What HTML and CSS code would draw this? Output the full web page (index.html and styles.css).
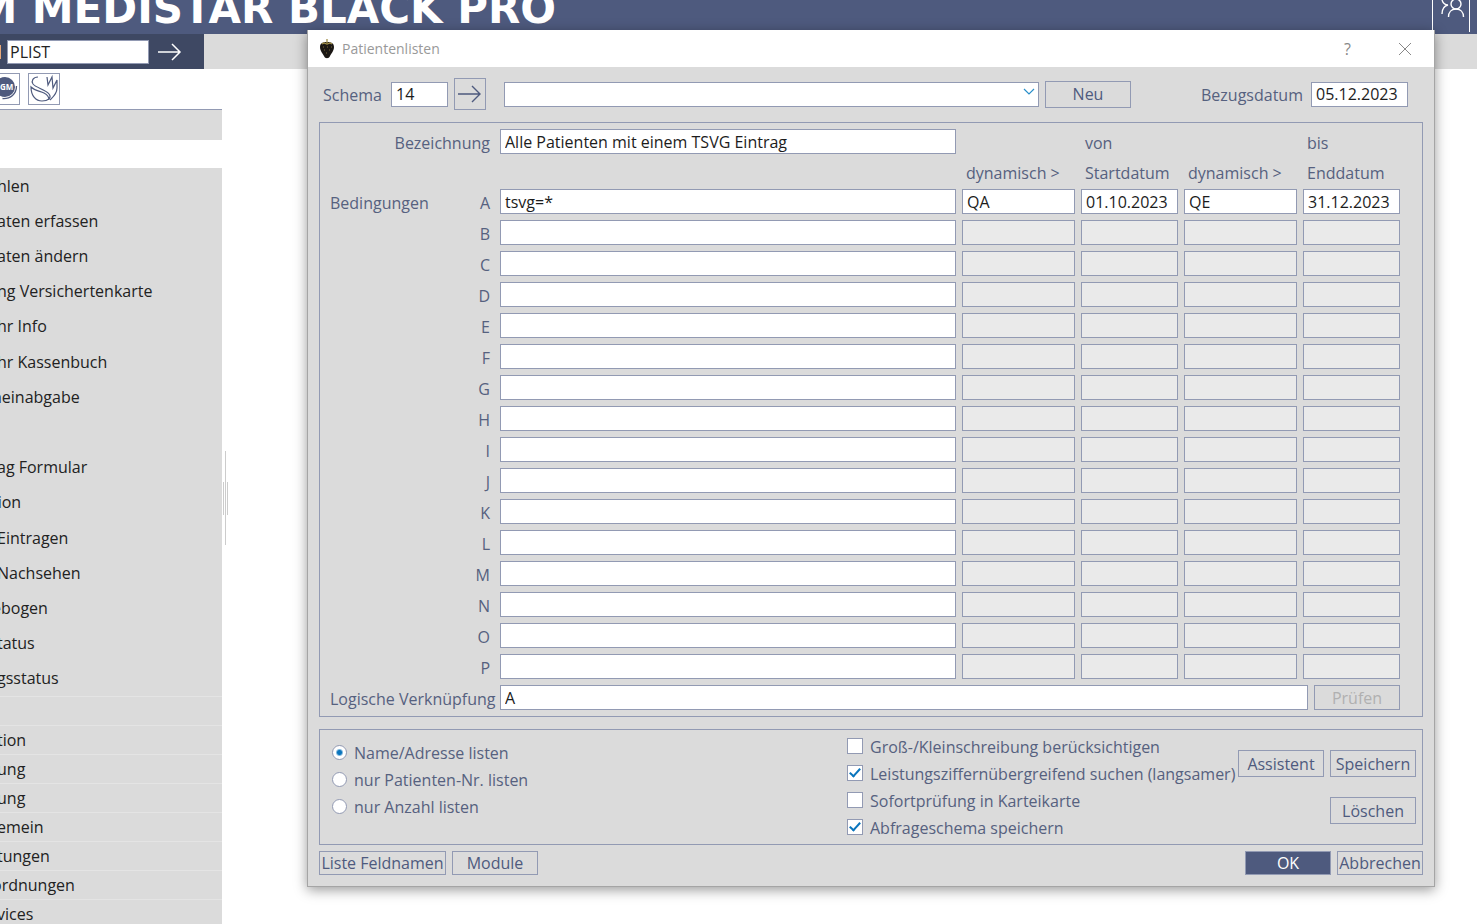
FILE: index.html
```html
<!DOCTYPE html>
<html lang="de">
<head>
<meta charset="utf-8">
<title>Patientenlisten</title>
<link rel="stylesheet" href="styles.css">
</head>
<body>
<div class="app">
  <header class="brand">
    <div class="brand-clip"><span class="brand-name">M MEDISTAR BLACK PRO</span></div>
    <button class="user-button" type="button" aria-label="Benutzer">
      <svg width="36" height="32" viewBox="0 0 36 32" fill="none" stroke="#fff" stroke-width="1.4"><circle cx="23" cy="4" r="5"/><path d="M15.500 17c0-5 3-8 7.500-8s7.500 3 7.500 8M9 0c1 3 3 5 6 5-4 1-6 4-6 9"/></svg>
    </button>
  </header>
  <div class="command-bar">
    <form class="command">
      <span class="marker"></span>
      <input class="command-input" type="text" value="PLIST" aria-label="Befehl">
      <button class="go" type="button" aria-label="Ausführen">
        <svg width="24" height="18" viewBox="0 0 24 18" fill="none" stroke="#fff" stroke-width="1.5"><path d="M0 9h22M14 1l8 8-8 8"/></svg>
      </button>
    </form>
  </div>
  <aside class="side">
    <div class="tools">
      <button class="tool" type="button" aria-label="CGM">
        <svg width="30" height="30" viewBox="0 0 30 30"><circle cx="16" cy="13" r="10" fill="#4e5a7e"/><path d="M27.500 12c0 8-6 13-14 12.500" fill="none" stroke="#4e5a7e" stroke-width="1.3"/><text x="11" y="16" class="tool-text">GM</text></svg>
      </button>
      <button class="tool" type="button" aria-label="Signatur">
        <svg width="30" height="30" viewBox="0 0 30 30" fill="none" stroke="#4e5a7e" stroke-width="1.2"><path d="M9 3C4 3 2 7 4 10c3 4 12 5 16 10 3 4-1 7-7 7C7 27 2 22 2 13c4 4 9 4 13 6 4 2 5 4 5 7"/><path d="M18 3l1 8 4-8 1 11 4-8v8c0 6-4 9-7 12"/></svg>
      </button>
    </div>
    <div class="side-head"></div>
    <nav class="menu">
      <a href="#">hlen</a><a href="#">aten erfassen</a><a href="#">aten ändern</a><a href="#">ng Versichertenkarte</a><a href="#">hr Info</a><a href="#">hr Kassenbuch</a><a class="cut" href="#">heinabgabe</a><span></span><a href="#">ag Formular</a><a class="cut" href="#">tion</a><a href="#">Eintragen</a><a href="#">Nachsehen</a><a class="cut" href="#">ebogen</a><a href="#">tatus</a><a href="#">gsstatus</a>
    </nav>
    <nav class="sections">
      <span></span><a href="#">tion</a><a href="#">ung</a><a href="#">ung</a><a href="#">emein</a><a href="#">tungen</a><a class="cut" href="#">ordnungen</a><a href="#">vices</a>
    </nav>
  </aside>
  <div class="splitter"></div>
</div>

<section class="dialog" role="dialog" aria-labelledby="dialog-title">
  <div class="title-bar">
    <svg width="16" height="20" viewBox="0 0 16 20"><path d="M1 8C1 4 4 3 8 3s7 1 7 5c0 4-3 7-4 9-1 3-5 3-6 0C4 15 1 12 1 8z" fill="#1b1714"/><path d="M8 0v4M3 5l2-1 3 1 3-1 2 1" fill="none" stroke="#a3904a" stroke-width="1.3"/><path d="M4 8h1M8 8h1M12 8h1M5 11h1M10 11h1M7 14h1" stroke="#7c6c3a"/></svg>
    <h1 id="dialog-title">Patientenlisten</h1>
    <button class="window-button" type="button">?</button>
    <button class="window-button" type="button" aria-label="Schließen"><svg width="12" height="12" viewBox="0 0 12 12" stroke="#888" fill="none"><path d="M0 0l12 12M12 0L0 12"/></svg></button>
  </div>
  <form class="dialog-body">
    <div class="schema-row">
      <label for="schema">Schema</label>
      <input class="field schema-input" id="schema" type="text" value="14">
      <button class="button arrow-button" type="button" aria-label="Schema laden"><svg width="24" height="18" viewBox="0 0 24 18" fill="none" stroke="#4e5a7e" stroke-width="1.4"><path d="M0 9h22M14 1l8 8-8 8"/></svg></button>
      <div class="combo">
        <select class="field" aria-label="Schemaname"><option></option></select>
        <svg class="chevron" width="12" height="7" viewBox="0 0 12 7" fill="none" stroke="#2a8fc9" stroke-width="1.2"><path d="M1 1l5 5 5-5"/></svg>
      </div>
      <button class="button tall" type="button">Neu</button>
      <label class="ref-label" for="ref-date">Bezugsdatum</label>
      <input class="field date-input" id="ref-date" type="text" value="05.12.2023">
    </div>

    <div class="box conditions" id="conditions">
      <label class="row-label" for="name">Bezeichnung</label>
      <input class="field" id="name" type="text" value="Alle Patienten mit einem TSVG Eintrag">
      <span class="head from">von</span>
      <span class="head until">bis</span>
      <span class="head dynamic">dynamisch &gt;</span>
      <span class="head">Startdatum</span>
      <span class="head">dynamisch &gt;</span>
      <span class="head">Enddatum</span>
      <label class="row-label first" for="cond-A"><span>Bedingungen</span><span>A</span></label>
      <input class="field" id="cond-A" type="text" value="tsvg=*">
      <input class="field" type="text" value="QA" aria-label="A dynamisch von">
      <input class="field" type="text" value="01.10.2023" aria-label="A Startdatum">
      <input class="field" type="text" value="QE" aria-label="A dynamisch bis">
      <input class="field" type="text" value="31.12.2023" aria-label="A Enddatum">
      <div class="rows" id="rows"></div>
      <label class="row-label" for="logic">Logische Verknüpfung</label>
      <div class="logic">
        <input class="field" id="logic" type="text" value="A">
        <button class="button" type="button" disabled>Prüfen</button>
      </div>
    </div>

    <div class="box options">
      <div class="choices radios">
        <label><input type="radio" name="output" checked>Name/Adresse listen</label>
        <label><input type="radio" name="output">nur Patienten-Nr. listen</label>
        <label><input type="radio" name="output">nur Anzahl listen</label>
      </div>
      <div class="choices">
        <label><input type="checkbox">Groß-/Kleinschreibung berücksichtigen</label>
        <label><input type="checkbox" checked>Leistungsziffernübergreifend suchen (langsamer)</label>
        <label><input type="checkbox">Sofortprüfung in Karteikarte</label>
        <label><input type="checkbox" checked>Abfrageschema speichern</label>
      </div>
      <div class="actions">
        <button class="button tall" type="button">Assistent</button>
        <button class="button tall" type="button">Speichern</button>
        <button class="button tall last" type="button">Löschen</button>
      </div>
    </div>

    <div class="footer">
      <button class="button wide" type="button">Liste Feldnamen</button>
      <button class="button" type="button">Module</button>
      <button class="button primary" type="button">OK</button>
      <button class="button" type="button">Abbrechen</button>
    </div>
  </form>
</section>
<script src="script.js"></script>
</body>
</html>
```
FILE: styles.css
```css
:root {
  --brand: #4e5a7e;
  --brand-dark: #3e4863;
  --line: #929ab3;
  --panel: #dbdbdb;
  --label: #56617f;
}

*, *::before, *::after { box-sizing: border-box; }

body {
  margin: 0;
  min-height: 100vh;
  background: #fff;
  color: #222;
  font: 16px/20px "Open Sans", "Noto Sans", sans-serif;
  overflow: hidden;
}

input, button, select { font: inherit; }
a { color: inherit; text-decoration: none; }
svg { display: block; flex: none; }

.app { height: 100vh; overflow: hidden; }

.brand {
  display: flex;
  justify-content: space-between;
  height: 34px;
  padding-right: 7px;
  background: var(--brand);
  overflow: hidden;
}
.brand-clip {
  display: flex;
  align-items: flex-end;
  justify-content: flex-end;
  width: 556px;
  height: 34px;
  overflow: hidden;
}
.brand-name {
  color: #fff;
  font: bold 42px/50px "DejaVu Sans", sans-serif;
  white-space: nowrap;
}
.user-button {
  width: 38px;
  height: 32px;
  padding: 0;
  border: solid #fff;
  border-width: 0 1px;
  background: none;
}

.command-bar { height: 35px; background: var(--panel); }
.command {
  display: flex;
  align-items: center;
  gap: 6px;
  width: 204px;
  height: 35px;
  background: var(--brand-dark);
}
.marker { width: 1px; height: 14px; background: #e8a878; }
.command-input {
  width: 142px;
  height: 24px;
  padding: 0 2px;
  border: 1px solid var(--line);
  background: #fff;
  color: #222;
}
.go { padding: 0 3px; border: 0; background: none; }

.side { width: 222px; }
.tools {
  display: flex;
  gap: 8px;
  height: 40px;
  margin-left: -12px;
  padding-top: 4px;
}
.tool {
  width: 32px;
  height: 32px;
  padding: 0;
  border: 1px solid var(--line);
  background: #fff;
}
.tool-text { font: bold 8px "Open Sans", sans-serif; fill: #fff; }
.side-head {
  height: 31px;
  margin-bottom: 28px;
  border-top: 1px solid var(--line);
  background: var(--panel);
}
.menu {
  display: grid;
  grid-auto-rows: 1fr;
  height: 528px;
  background: var(--panel);
}
.menu > *, .sections > * {
  display: flex;
  align-items: center;
  text-indent: -3px;
  white-space: nowrap;
}
.menu > .cut, .sections > .cut { text-indent: -8px; }
.sections > * {
  height: 29px;
  border-top: 1px solid #e4e4e4;
  background: var(--panel);
}

.splitter {
  position: absolute;
  top: 451px;
  left: 225px;
  width: 1px;
  height: 94px;
  background: #ccc;
}
.splitter::after {
  content: "";
  position: absolute;
  top: 31px;
  left: -2px;
  width: 5px;
  height: 33px;
  border: solid #ccc;
  border-width: 0 1px;
}

.dialog {
  position: absolute;
  top: 30px;
  left: 307px;
  right: 42px;
  border: solid #a5a5a5;
  border-width: 0 1px 1px;
  background: var(--panel);
  color: var(--label);
  box-shadow: 0 3px 12px rgba(0, 0, 0, .4);
}
.title-bar {
  display: flex;
  align-items: center;
  height: 37px;
  padding: 0 1px 0 11px;
  background: #fff;
  color: #999;
}
.title-bar h1 {
  flex: 1;
  margin: 0 0 0 7px;
  font-size: 14px;
  font-weight: normal;
}
.window-button {
  display: flex;
  align-items: center;
  justify-content: center;
  width: 57px;
  height: 37px;
  border: 0;
  background: none;
  color: #888;
}

.dialog-body { padding: 11px; }

.field {
  width: 100%;
  min-width: 0;
  height: 25px;
  padding: 0 4px;
  border: 1px solid var(--line);
  border-radius: 0;
  background: #fff;
  color: #1c1c1c;
}
.field:disabled { background: #eaeaea; }

.button {
  display: flex;
  align-items: center;
  justify-content: center;
  flex: none;
  width: 86px;
  height: 24px;
  padding: 0;
  border: 1px solid var(--line);
  background: none;
  color: var(--brand);
  white-space: nowrap;
}
.button:disabled { height: 25px; color: #b0b0b0; }
.button.tall { height: 27px; }
.button.wide { width: 127px; }
.button.primary { margin-left: auto; background: var(--brand); color: #fff; }

.schema-row {
  display: flex;
  align-items: center;
  gap: 6px;
  height: 32px;
  margin-bottom: 12px;
  padding: 0 15px 0 4px;
}
.schema-row label { padding-top: 2px; }
.schema-row label:first-child { width: 62px; }
.schema-input { width: 57px; }
.schema-row .arrow-button { width: 32px; height: 32px; }
.combo { position: relative; flex: 1; margin-left: 12px; }
.combo select { display: block; appearance: none; }
.chevron { position: absolute; top: 6px; right: 4px; }
.ref-label { width: 104px; margin-left: 64px; }
.date-input { width: 97px; }

.box { border: 1px solid var(--line); }

.conditions, .rows {
  display: grid;
  grid-template-columns: 164px 1fr 113px 97px 113px 97px;
  gap: 6px;
}
.conditions { padding: 6px 22px 6px 10px; }
.rows { grid-column: 1 / -1; }
.row-label {
  height: 25px;
  padding: 4px 4px 0 0;
  text-align: right;
  white-space: nowrap;
}
.row-label.first { display: flex; justify-content: space-between; }
.head { padding: 3px 4px 0; white-space: nowrap; height: 23px; }
.head.from, .head.until { padding-top: 4px; }
.head.from { grid-column: 4; }
.head.until { grid-column: 6; }
.head.dynamic { grid-column: 3; }
.logic { display: flex; gap: 6px; grid-column: 2 / -1; }

.options {
  display: grid;
  grid-template-columns: 1fr 385px auto;
  gap: 6px;
  margin-top: 12px;
  padding: 3px 6px 3px 12px;
}
.choices label {
  display: flex;
  align-items: center;
  gap: 7px;
  height: 27px;
  white-space: nowrap;
}
.radios { padding-top: 6px; }
.choices input {
  appearance: none;
  flex: none;
  width: 16px;
  height: 16px;
  margin: 0 0 2px;
  border: 1px solid var(--line);
  background: #fff;
}
.choices input[type="radio"] { width: 15px; height: 15px; margin-bottom: 0; border-radius: 50%; }
.choices input[type="radio"]:checked { background: radial-gradient(circle, #0a75bd 2px, #fff 4px); }
.choices input[type="checkbox"]:checked::after {
  content: "";
  display: block;
  width: 6px;
  height: 11px;
  margin: 0 auto;
  border: solid #0a75bd;
  border-width: 0 2px 2px 0;
  transform: rotate(42deg);
}
.actions {
  display: grid;
  grid-template-columns: 86px 86px;
  align-content: start;
  gap: 20px 6px;
  padding-top: 17px;
}
.actions .last { grid-column: 2; }

.footer { display: flex; gap: 6px; margin-top: 6px; }
```
FILE: script.js
```js
const rows = document.getElementById("rows");
for (const letter of "BCDEFGHIJKLMNOP") {
  const label = document.createElement("label");
  label.className = "row-label";
  label.htmlFor = "cond-" + letter;
  label.textContent = letter;
  rows.append(label);
  ["Bedingung", "dynamisch von", "Startdatum", "dynamisch bis", "Enddatum"].forEach((name, index) => {
    const input = document.createElement("input");
    input.type = "text";
    input.className = "field";
    input.setAttribute("aria-label", letter + " " + name);
    if (index === 0) input.id = "cond-" + letter;
    else input.disabled = true;
    rows.append(input);
  });
}
```
